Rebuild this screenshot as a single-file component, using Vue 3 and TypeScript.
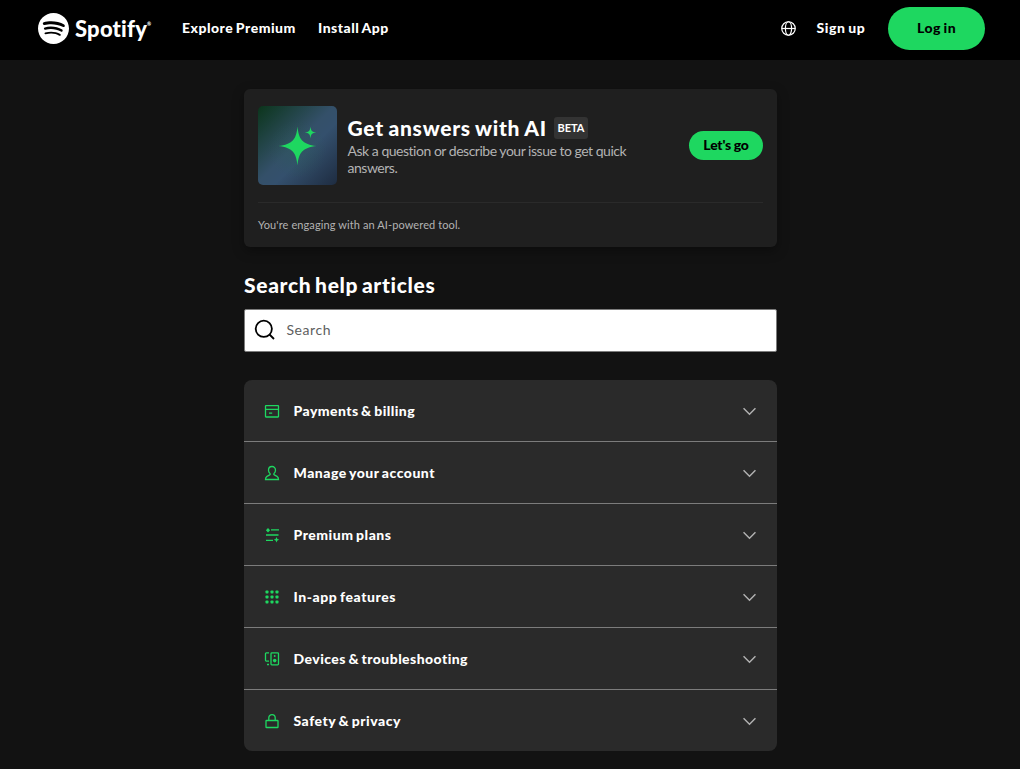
<script setup lang="ts">
interface Topic {
  key: string
  label: string
}

const topics: Topic[] = [
  { key: 'payments', label: 'Payments & billing' },
  { key: 'account', label: 'Manage your account' },
  { key: 'plans', label: 'Premium plans' },
  { key: 'features', label: 'In-app features' },
  { key: 'devices', label: 'Devices & troubleshooting' },
  { key: 'safety', label: 'Safety & privacy' },
]

const dots: number[] = [1.5, 6.5, 11.5]
</script>

<template>
  <div class="page">
    <header class="topbar">
      <a class="brand">
        <svg class="brand-mark" viewBox="0 0 24 24">
          <path fill="#fff" d="M12 0C5.4 0 0 5.4 0 12s5.4 12 12 12 12-5.4 12-12S18.66 0 12 0zm5.521 17.34c-.24.359-.66.48-1.021.24-2.82-1.74-6.36-2.101-10.561-1.141-.418.122-.779-.179-.899-.539-.12-.421.18-.78.54-.9 4.56-1.021 8.52-.6 11.64 1.32.42.18.479.659.301 1.02zm1.44-3.3c-.301.42-.841.6-1.262.3-3.239-1.98-8.159-2.58-11.939-1.38-.479.12-1.02-.12-1.14-.6-.12-.48.12-1.021.6-1.141C9.6 9.9 15 10.561 18.72 12.84c.361.181.54.78.241 1.2zm.12-3.36C15.24 8.4 8.82 8.16 5.16 9.301c-.6.179-1.2-.181-1.38-.721-.18-.601.18-1.2.72-1.381 4.26-1.26 11.28-1.02 15.721 1.621.539.3.719 1.02.419 1.56-.299.421-1.02.599-1.559.3z" />
        </svg>
        <span class="brand-name">Spotify</span><span class="brand-reg">®</span>
      </a>
      <nav class="nav">
        <a class="nav-explore">Explore Premium</a>
        <a class="nav-install">Install App</a>
      </nav>
      <div class="actions">
        <svg class="globe" viewBox="0 0 16 16" fill="none" stroke="#fff" stroke-width="1.300">
          <circle cx="8" cy="8" r="7.200" />
          <ellipse cx="8" cy="8" rx="3.300" ry="7.200" />
          <path d="M.8 8h14.400" />
        </svg>
        <a class="signup">Sign up</a>
        <button class="login">Log in</button>
      </div>
    </header>

    <main class="content">
      <section class="ai-card">
        <div class="ai-row">
          <div class="ai-art">
            <svg viewBox="0 0 79 79">
              <path fill="#1ed760" d="M39.500 20.500C40.700 33.500 44.500 38.300 58.500 40C44.500 41.700 40.700 46.500 39.500 59.500C38.300 46.500 34.500 41.700 20.500 40C34.500 38.300 38.300 33.500 39.500 20.500Z" />
              <path fill="#1ed760" d="M52.500 20.500C53 24.800 54 26 58.200 26.500C54 27 53 28.200 52.500 32.500C52 28.200 51 27 46.800 26.500C51 26 52 24.800 52.500 20.500Z" />
            </svg>
          </div>
          <div class="ai-copy">
            <div class="ai-heading">
              <h2 class="ai-title">Get answers with AI</h2>
              <span class="beta">BETA</span>
            </div>
            <p class="ai-desc">Ask a question or describe your issue to get quick<br />answers.</p>
          </div>
          <button class="go">Let's go</button>
        </div>
        <p class="ai-note">You're engaging with an AI-powered tool.</p>
      </section>

      <h2 class="search-title">Search help articles</h2>
      <div class="search">
        <svg class="search-icon" viewBox="0 0 22 22" fill="none" stroke="#000" stroke-width="1.800">
          <circle cx="9.800" cy="9.800" r="8.100" />
          <path d="M15.500 15.500L20 20" />
        </svg>
        <span class="search-hint">Search</span>
      </div>

      <ul class="topics">
        <li v-for="topic in topics" :key="topic.key" class="topic">
          <svg class="topic-icon" viewBox="0 0 16 16" fill="none" stroke="#1ed760" stroke-width="1.300">
            <template v-if="topic.key === 'payments'">
              <rect x="1.500" y="2.700" width="13" height="11.300" rx=".5" />
              <path d="M1.500 6.300h13M5 10.200h3.200" />
            </template>
            <template v-else-if="topic.key === 'account'">
              <path d="M8 1.500c-2.200 0-3.500 1.600-3.500 3.700 0 1.300.6 2.400 1.400 3.200.5.500.4 1.200-.2 1.500L3 11.300c-1 .5-1.500 1.400-1.500 3.200h13c0-1.800-.5-2.700-1.500-3.200l-2.700-1.400c-.6-.3-.7-1-.2-1.500.8-.8 1.400-1.900 1.400-3.200 0-2.100-1.300-3.700-3.500-3.700z" />
            </template>
            <template v-else-if="topic.key === 'plans'">
              <path d="M7 2.800h8M2 8h12.500M2 13.300h7" />
              <path fill="#1ed760" stroke="none" d="M4 1L6.100 3.300 4 5.600 1.900 3.300zM12.500 9.900l.9 2 1.900.8-1.900.8-.9 2-.9-2-1.900-.8 1.900-.8z" />
            </template>
            <template v-else-if="topic.key === 'features'">
              <g fill="#1ed760" stroke="none">
                <template v-for="y in dots" :key="y">
                  <rect v-for="x in dots" :key="x" :x="x" :y="y" width="3" height="3" rx=".8" />
                </template>
              </g>
            </template>
            <template v-else-if="topic.key === 'devices'">
              <path d="M5 1.900H2.300q-.8 0-.8.800v6.600q0 .8.800.8H5M3 13.500h2" />
              <rect x="7" y="1.900" width="7.500" height="11.900" rx=".8" />
              <circle cx="10.700" cy="9.600" r="1.800" fill="#1ed760" stroke="none" />
              <circle cx="10.700" cy="5" r=".9" fill="#1ed760" stroke="none" />
            </template>
            <template v-else>
              <rect x="2" y="7.500" width="12" height="7" rx=".6" />
              <path d="M4.800 7.500V4.800a3.200 3.200 0 0 1 6.400 0v2.700" />
            </template>
          </svg>
          <span class="topic-label" :class="topic.key">{{ topic.label }}</span>
          <svg class="chevron" viewBox="0 0 12 8" fill="none" stroke="#b3b3b3" stroke-width="1.300">
            <path d="M.5 1L6 6.500 11.500 1" />
          </svg>
        </li>
      </ul>
    </main>
  </div>
</template>

<style>
body {
  margin: 0;
  background: #121212;
}
</style>

<style scoped>
.page {
  height: 769px;
  overflow: hidden;
  background: #121212;
  color: #fff;
  font-family: Lato, "Liberation Sans", sans-serif;
  font-size: 14px;
}
.topbar {
  box-sizing: border-box;
  height: 60px;
  padding: 0 35px 3px 38px;
  display: flex;
  align-items: center;
  background: #000;
  font-weight: 900;
  white-space: nowrap;
  letter-spacing: 0.5px;
  word-spacing: -1.2px;
}
.brand {
  display: flex;
  align-items: center;
  width: 144px;
}
.brand-mark {
  width: 31px;
  height: 31px;
  margin-right: 6px;
}
.brand-name {
  font-size: 22px;
  line-height: 30px;
  letter-spacing: 0.2px;
}
.brand-reg {
  margin-top: -9px;
  font-size: 5px;
  letter-spacing: 0;
}
.nav {
  display: flex;
  padding-bottom: 2px;
}
.nav-explore {
  width: 136px;
}
.actions {
  margin-left: auto;
  display: flex;
  align-items: center;
}
.globe {
  width: 15px;
  height: 15px;
  margin-right: 21px;
}
.signup {
  width: 71.5px;
  padding-bottom: 2px;
  letter-spacing: 0.6px;
}
button {
  padding: 0 0 2px;
  border: 0;
  background: #1ed760;
  color: #000;
  font: inherit;
  font-weight: 900;
}
.login {
  width: 97px;
  height: 43px;
  border-radius: 22px;
  letter-spacing: 0.5px;
  word-spacing: -1.2px;
}
.content {
  width: 533px;
  margin: 29px 0 0 244px;
}
.ai-card {
  box-sizing: border-box;
  height: 158px;
  padding: 17px 14px 0;
  border-radius: 6px;
  background: #1f1f1f;
  box-shadow: 0 4px 12px rgba(0, 0, 0, 0.35);
}
.ai-row {
  display: flex;
  align-items: center;
  padding-bottom: 17px;
  border-bottom: 1px solid #2a2a2a;
}
.ai-art {
  width: 79px;
  height: 79px;
  border-radius: 5px;
  background:
    radial-gradient(circle at 50% 55%, rgba(40, 95, 80, 0.35), transparent 50%),
    linear-gradient(135deg, #0b351b 0%, #345069 48%, #34506d 60%, #1e2c41 100%);
}
.ai-art svg {
  display: block;
}
.ai-copy {
  margin-left: 10.5px;
  padding-top: 6px;
}
.ai-heading {
  display: flex;
  align-items: center;
  height: 22px;
}
.ai-title,
.search-title {
  margin: 0;
  font-size: 21px;
  font-weight: 900;
  line-height: 24px;
  white-space: nowrap;
}
.ai-title {
  width: 206.5px;
  letter-spacing: 0.72px;
  word-spacing: -1px;
}
.beta {
  width: 34px;
  height: 22px;
  border-radius: 3px;
  background: #333;
  font-size: 11px;
  font-weight: 700;
  line-height: 21px;
  text-align: center;
}
.ai-desc {
  margin: 3px 0 5px;
  color: #b3b3b3;
  line-height: 17px;
  letter-spacing: -0.48px;
  white-space: nowrap;
}
.go {
  width: 74px;
  height: 29px;
  margin-left: auto;
  border-radius: 15px;
  letter-spacing: -0.2px;
  word-spacing: -0.5px;
}
.ai-note {
  margin: 15px 0 0;
  color: #b3b3b3;
  font-size: 11px;
  line-height: 14px;
  letter-spacing: 0.1px;
}
.search-title {
  margin-top: 26px;
  letter-spacing: 0.68px;
  word-spacing: -2px;
}
.search {
  box-sizing: border-box;
  height: 43px;
  margin-top: 12px;
  padding: 0 0 2px 9px;
  display: flex;
  align-items: center;
  border: 1px solid #7c7c7c;
  border-radius: 2px;
  background: #fff;
  color: #5e5e5e;
}
.search-icon {
  width: 22px;
  height: 22px;
  margin-right: 10.5px;
}
.search-hint {
  letter-spacing: 0.55px;
}
.topics {
  margin: 28px 0 0;
  padding: 0;
  overflow: hidden;
  border-radius: 8px;
  background: #2a2a2a;
  list-style: none;
}
.topic {
  height: 61px;
  padding: 0 21px 0 20px;
  display: flex;
  align-items: center;
  border-bottom: 1px solid #7c7c7c;
}
.topic:last-child {
  border-bottom: 0;
}
.topic-icon {
  width: 16px;
  height: 16px;
  margin-right: 13.5px;
}
.topic-label {
  font-weight: 900;
  letter-spacing: 0.5px;
  word-spacing: -1.2px;
}
.topic-label.payments,
.topic-label.devices {
  letter-spacing: 0.43px;
}
.topic-label.features {
  letter-spacing: 0.56px;
}
.chevron {
  width: 13px;
  height: 9px;
  margin: 2px 0 0 auto;
}
</style>
